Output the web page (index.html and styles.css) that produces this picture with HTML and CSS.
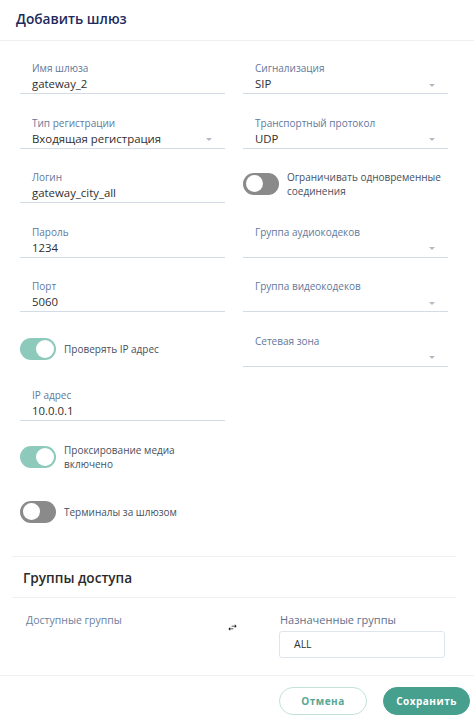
FILE: index.html
```html
<!DOCTYPE html>
<html lang="ru">
<head>
<meta charset="utf-8">
<title>Добавить шлюз</title>
<link rel="stylesheet" href="styles.css">
</head>
<body>
<div class="dialog">
  <div class="header"><h1 class="title">Добавить шлюз</h1></div>
  <div class="form">
    <div class="col">
      <div class="field">
        <div class="label">Имя шлюза</div>
        <div class="value">gateway_2</div>
      </div>
      <div class="field select">
        <div class="label">Тип регистрации</div>
        <div class="value">Входящая регистрация<span class="arrow"></span></div>
      </div>
      <div class="field">
        <div class="label">Логин</div>
        <div class="value">gateway_city_all</div>
      </div>
      <div class="field">
        <div class="label">Пароль</div>
        <div class="value">1234</div>
      </div>
      <div class="field">
        <div class="label">Порт</div>
        <div class="value">5060</div>
      </div>
      <div class="toggle-row t-check">
        <span class="toggle on"><span class="knob"></span></span>
        <span class="toggle-text">Проверять IP адрес</span>
      </div>
      <div class="field">
        <div class="label">IP адрес</div>
        <div class="value">10.0.0.1</div>
      </div>
      <div class="toggle-row t-proxy">
        <span class="toggle on"><span class="knob"></span></span>
        <span class="toggle-text">Проксирование медиа<br>включено</span>
      </div>
      <div class="toggle-row t-term">
        <span class="toggle"><span class="knob"></span></span>
        <span class="toggle-text">Терминалы за шлюзом</span>
      </div>
    </div>
    <div class="col">
      <div class="field select">
        <div class="label">Сигнализация</div>
        <div class="value">SIP<span class="arrow"></span></div>
      </div>
      <div class="field select">
        <div class="label">Транспортный протокол</div>
        <div class="value">UDP<span class="arrow"></span></div>
      </div>
      <div class="toggle-row t-limit">
        <span class="toggle"><span class="knob"></span></span>
        <span class="toggle-text">Ограничивать одновременные<br>соединения</span>
      </div>
      <div class="field select">
        <div class="label">Группа аудиокодеков</div>
        <div class="value"><span class="arrow"></span></div>
      </div>
      <div class="field select">
        <div class="label">Группа видеокодеков</div>
        <div class="value"><span class="arrow"></span></div>
      </div>
      <div class="field select">
        <div class="label">Сетевая зона</div>
        <div class="value"><span class="arrow"></span></div>
      </div>
    </div>
  </div>
  <div class="access">
    <h2 class="access-title">Группы доступа</h2>
    <div class="groups">
      <div class="group-left">Доступные группы</div>
      <div class="swap">
        <svg width="11" height="11" viewBox="0 0 24 24"><path d="M6.99 11L3 15l3.99 4v-3H14v-2H6.99v-3zM21 9l-3.99-4v3H10v2h7.01v3L21 9z" fill="#1f1f1f"/></svg>
      </div>
      <div class="group-right">
        <div class="group-label">Назначенные группы</div>
        <div class="group-box">ALL</div>
      </div>
    </div>
  </div>
  <div class="footer">
    <button class="btn btn-cancel">Отмена</button>
    <button class="btn btn-save">Сохранить</button>
  </div>
</div>
</body>
</html>
```
FILE: styles.css
```css
* { box-sizing: border-box; }
html, body { margin: 0; padding: 0; background: #ffffff; }
body { font-family: "Open Sans", "Noto Sans", sans-serif; color: #333; }

.dialog { width: 474px; }

.header {
  height: 41px;
  border-bottom: 1px solid #eef0f3;
  padding: 0 16px;
  display: flex;
  align-items: center;
}
.title {
  margin: 0;
  font-size: 13.7px;
  font-weight: 600;
  color: #1d2a5c;
  position: relative;
  top: -2px;
}

.form {
  display: flex;
  gap: 18px;
  padding: 20px 26px 0 20px;
}
.col { width: 205px; display: flex; flex-direction: column; }

.field {
  padding-left: 12px;
  border-bottom: 1px solid #d3dbe6;
  margin-bottom: 21.5px;
}
.label {
  font-size: 10px;
  line-height: 14px;
  color: #62789a;
}
.value {
  font-size: 11.4px;
  line-height: 18px;
  height: 18px;
  color: #2f2f2f;
  display: flex;
  align-items: center;
  justify-content: space-between;
}
.arrow {
  width: 0; height: 0;
  border-left: 3px solid transparent;
  border-right: 3px solid transparent;
  border-top: 3px solid #b3bac6;
  margin-left: auto;
  margin-right: 13px;
  margin-top: 2px;
}

.toggle-row {
  display: flex;
  align-items: center;
  gap: 8px;
  min-height: 22px;
}
.toggle {
  flex: none;
  width: 36px;
  height: 22px;
  border-radius: 11px;
  background: #8a8a8a;
  position: relative;
}
.toggle.on { background: #8ecabc; }
.knob {
  position: absolute;
  top: 2px;
  left: 3px;
  width: 17px;
  height: 17px;
  border-radius: 50%;
  background: #fff;
}
.toggle.on .knob { left: auto; right: 2px; top: 2px; width: 18px; height: 18px; }
.toggle-text {
  font-size: 10px;
  line-height: 14px;
  color: #46505e;
}
.t-check { margin-top: 4.5px; margin-bottom: 28px; }
.t-proxy { margin-top: 0.5px; }
.t-term { margin-top: 30px; }
.t-limit { margin-top: -0.5px; margin-bottom: 27px; min-height: 28px; }

.access {
  margin: 33px 18px 0 12px;
  border-top: 1px solid #eef0f3;
}
.access-title {
  margin: 0;
  height: 41px;
  padding-left: 11px;
  display: flex;
  align-items: center;
  font-size: 13.6px;
  font-weight: 600;
  color: #2b2b2b;
  border-bottom: 1px solid #eef0f3;
}
.groups {
  display: flex;
  padding-top: 15px;
  height: 77px;
}
.group-left {
  width: 205px;
  padding-left: 14px;
  font-size: 10.5px;
  line-height: 14px;
  color: #6b7fa0;
}
.swap {
  width: 62px;
  padding-top: 9px;
  padding-left: 10px;
}
.swap svg { display: block; }
.group-right { width: 166px; }
.group-label {
  font-size: 11px;
  line-height: 14px;
  color: #5e6f8c;
  padding-left: 1px;
}
.group-box {
  margin-top: 4px;
  height: 27px;
  border: 1px solid #dfe5ec;
  border-radius: 3px;
  padding-left: 14px;
  font-size: 10.5px;
  line-height: 25px;
  color: #2f2f2f;
}

.footer {
  border-top: 1px solid #eef0f3;
  display: flex;
  justify-content: flex-end;
  gap: 16px;
  padding: 11px 4px 0 0;
}
.btn {
  height: 28px;
  border-radius: 14px;
  font-family: "Open Sans", "Noto Sans", sans-serif;
  font-size: 10px;
  font-weight: 700;
  letter-spacing: 0.5px;
  cursor: pointer;
}
.btn-cancel {
  width: 88px;
  background: #fff;
  border: 1px solid #c3e2db;
  color: #58a796;
}
.btn-save {
  width: 87px;
  background: #47a08e;
  border: 1px solid #47a08e;
  color: #fff;
}
```
